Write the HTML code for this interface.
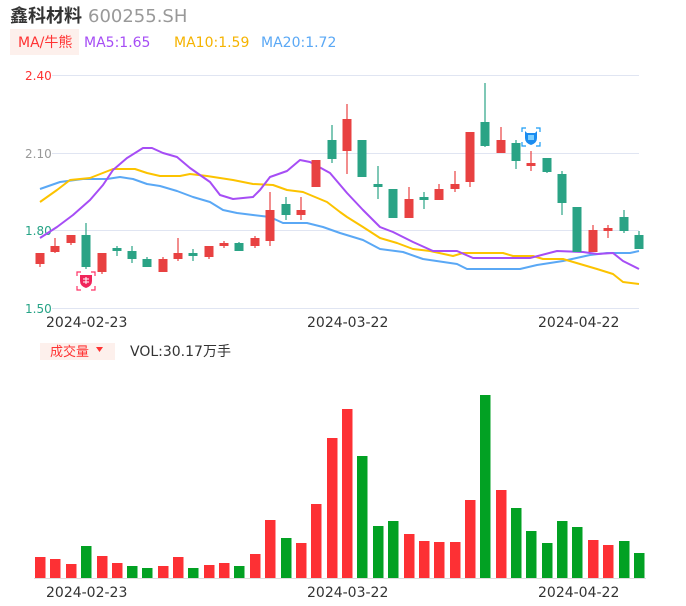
<!DOCTYPE html>
<html><head><meta charset="utf-8"><style>
html,body{margin:0;padding:0;background:#fff;width:686px;height:606px;overflow:hidden}
svg{display:block}
text{font-family:"DejaVu Sans","Liberation Sans","Noto Sans CJK SC",sans-serif}
</style></head><body>
<svg width="686" height="606" viewBox="0 0 686 606" xmlns="http://www.w3.org/2000/svg">
<text x="10" y="22" font-size="18" fill="#333" font-family="'Noto Sans CJK SC',sans-serif" font-weight="bold">鑫科材料</text>
<text x="88" y="22" font-size="18" fill="#999">600255.SH</text>
<rect x="10" y="29" width="69" height="26" fill="#fdf0ec"/>
<text x="18" y="47" font-size="14" fill="#f33">MA/<tspan font-family="'Noto Sans CJK SC',sans-serif">牛熊</tspan></text>
<text x="84" y="47" font-size="14" fill="#a64df5">MA5:1.65</text>
<text x="174" y="47" font-size="14" fill="#f5b300">MA10:1.59</text>
<text x="261" y="47" font-size="14" fill="#5aa8f5">MA20:1.72</text>
<g stroke="#e0e5f2" stroke-width="1">
<line x1="52" y1="75.5" x2="639" y2="75.5"/><line x1="52" y1="153.5" x2="639" y2="153.5"/><line x1="52" y1="230.5" x2="639" y2="230.5"/><line x1="52" y1="308.5" x2="639" y2="308.5"/>
</g>
<g font-size="12"><text x="25" y="80" fill="#f33">2.40</text><text x="25" y="158" fill="#999">2.10</text><text x="25" y="235" fill="#26a386">1.80</text><text x="25" y="313" fill="#26a386">1.50</text></g>
<g font-size="14" fill="#333"><text x="46" y="327">2024-02-23</text><text x="307" y="327">2024-03-22</text><text x="538" y="327">2024-04-22</text></g>
<g fill="none" stroke-width="2" stroke-linejoin="round">
<polyline stroke="#5aa8f5" points="40,189 60,182 83,179 107,179 120,177 133,179 147,184 160,186 177,191 193,197 210,202 223,210 237,213 253,215 270,217 283,223 307,223 323,227 340,233 363,240 380,249 403,252 423,259 457,264 467,269 520,269 537,265 563,261 590,255 607,253 630,253 639,251"/>
<polyline stroke="#fcc300" points="40,202 57,190 70,180 90,178 113,169 135,169 147,173 160,176 180,176 190,174 207,176 233,180 253,184 273,185 287,190 303,192 327,202 340,212 347,217 363,227 380,238 397,243 413,249 430,251 453,256 463,253 503,253 513,256 533,256 543,259 563,259 580,264 597,269 613,274 623,282 639,284"/>
<polyline stroke="#a64df5" points="40,238 57,227 73,215 90,200 103,185 113,170 127,158 143,148 152,148 163,153 177,157 190,168 210,182 220,195 233,199 253,197 260,190 270,177 287,171 300,160 310,162 330,173 347,193 363,210 380,227 393,232 413,242 433,251 457,251 473,258 530,258 557,251 583,252 597,254 613,253 623,261 639,269"/>
</g>
<g id="c"></g>
<rect x="40" y="343" width="75" height="17" fill="#fdf0ec"/>
<text x="50" y="356" font-size="13" fill="#f33" font-family="'Noto Sans CJK SC',sans-serif">成交量</text>
<path d="M96 347 h7 l-3.5 5 z" fill="#f33"/>
<text x="130" y="356" font-size="14" fill="#333">VOL:30.17<tspan font-family="'Noto Sans CJK SC',sans-serif">万手</tspan></text>
<line x1="34" y1="578.5" x2="646" y2="578.5" stroke="#ddd"/>
<g font-size="14" fill="#333"><text x="46" y="597">2024-02-23</text><text x="307" y="597">2024-03-22</text><text x="538" y="597">2024-04-22</text></g>
<g id="v"></g>
<!-- icons -->
<g transform="translate(86,281)">
<path d="M-9,-5 v-4 h4 M5,-9 h4 v4 M9,5 v4 h-4 M-5,9 h-4 v-4" stroke="#f36" stroke-width="1.2" fill="none"/>
<path d="M-6,-6 h12 v6 q0,5 -6,7 q-6,-2 -6,-7 z" fill="#f0245a"/>
<path d="M-3,-2 h6 M-3,1 h6 M0,-4 v7" stroke="#fff" stroke-width="1"/>
</g>
<g transform="translate(531,137)">
<path d="M-9,-5 v-4 h4 M5,-9 h4 v4 M9,5 v4 h-4 M-5,9 h-4 v-4" stroke="#1a9cf5" stroke-width="1.2" fill="none"/>
<path d="M-6,-6 l2,2 h8 l2,-2 v7 q0,5 -6,7 q-6,-2 -6,-7 z" fill="#1a8cf0"/>
<rect x="-3" y="-2" width="6" height="5" fill="#7fd0ff"/>
</g>
</svg>
<script>
var C=[[40,253,264,253,267,0],[55,246,252,238,253,0],[71,235,243,235,245,0],[86,235,267,223,269,1],[102,253,272,253,274,0],[117,248,251,246,256,1],[132,251,259,246,263,1],[147,259,267,257,267,1],[163,259,272,257,272,0],[178,253,259,238,261,0],[193,253,256,249,261,1],[209,246,257,246,259,0],[224,243,246,241,248,0],[239,243,251,242,251,1],[255,238,246,236,248,0],[270,210,241,192,246,0],[286,204,215,197,220,1],[301,210,215,197,220,0],[316,160,187,160,187,0],[332,140,159,125,163,1],[347,119,151,104,174,0],[362,140,177,140,177,1],[378,184,187,166,199,1],[393,189,218,189,218,1],[409,199,218,187,218,0],[424,197,200,192,209,1],[439,189,200,184,200,0],[455,184,189,171,192,0],[470,132,182,132,187,0],[485,122,146,83,147,1],[501,140,153,127,153,0],[516,143,161,140,169,1],[531,163,166,151,171,0],[547,158,172,158,173,1],[562,174,203,171,215,1],[577,207,252,207,252,1],[593,230,252,225,252,0],[608,228,231,225,238,0],[624,217,231,210,233,1],[639,235,249,231,249,1]];
var V=[557,559,564,546,556,563,566,568,566,557,568,565,563,566,554,520,538,543,504,438,409,456,526,521,534,541,542,542,500,395,490,508,531,543,521,527,540,545,541,553];
var VC="rrrgrrggrrgrrgrrgrrrrgggrrrrrgrgggggrrgg";
var s="",ns="http://www.w3.org/2000/svg";
C.forEach(function(c){var col=c[5]?"#2aa385":"#e84141";
s+='<line x1="'+c[0]+'" x2="'+c[0]+'" y1="'+c[3]+'" y2="'+c[4]+'" stroke="'+col+'" stroke-width="1.2"/>';
s+='<rect x="'+(c[0]-4.5)+'" y="'+c[1]+'" width="9" height="'+Math.max(2,c[2]-c[1])+'" fill="'+col+'"/>';});
document.getElementById("c").innerHTML=s;
s="";
V.forEach(function(t,i){var x=C[i][0];var col=VC[i]=="g"?"#02a123":"#fd3034";
s+='<rect x="'+(x-5)+'" y="'+t+'" width="10.5" height="'+(578-t)+'" fill="'+col+'"/>';});
document.getElementById("v").innerHTML=s;
</script>
</body></html>
